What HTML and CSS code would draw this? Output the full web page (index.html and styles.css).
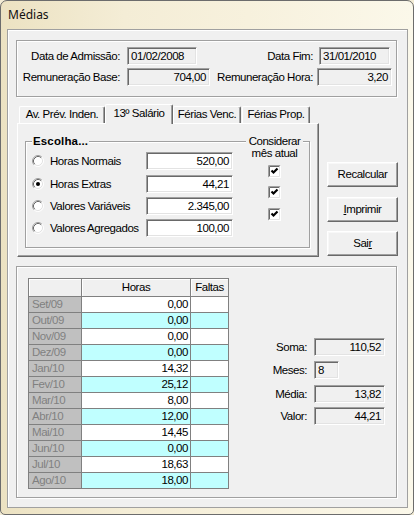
FILE: index.html
```html
<!DOCTYPE html>
<html lang="pt">
<head>
<meta charset="utf-8">
<title>Médias</title>
<link rel="stylesheet" href="styles.css">
</head>
<body>
<div class="window">
  <div class="titlebar">Médias</div>
  <div class="client">
    <div class="panel info">
      <div class="info-row">
        <span class="lbl lw1">Data de Admissão:</span>
        <span class="field ro fw-date">01/02/2008</span>
        <span class="lbl lw2">Data Fim:</span>
        <span class="field ro fw-date2">31/01/2010</span>
      </div>
      <div class="info-row">
        <span class="lbl lw1">Remuneração Base:</span>
        <span class="field ro num fw-base">704,00</span>
        <span class="lbl lw3">Remuneração Hora:</span>
        <span class="field ro num fw-hora">3,20</span>
      </div>
    </div>

    <div class="middle">
      <div class="tabs">
        <div class="tabstrip">
          <div class="tab tab1">Av. Prév. Inden.</div>
          <div class="tab tab2 active">13º Salário</div>
          <div class="tab tab3">Férias Venc.</div>
          <div class="tab tab4">Férias Prop.</div>
        </div>
        <div class="tabpanel">
          <div class="group">
            <span class="cap cap-left">Escolha...</span>
            <span class="cap cap-right">Considerar<br>mês atual</span>
            <div class="group-body">
              <div class="options">
                <div class="opt">
                  <svg class="radio" width="12" height="12" viewBox="0 0 12 12"><circle cx="6" cy="6" r="5" fill="#fff"/><path d="M2.11 9.89A5.5 5.5 0 0 1 9.89 2.11" fill="none" stroke="#a0a0a0"/><path d="M9.89 2.11A5.5 5.5 0 0 1 2.11 9.89" fill="none" stroke="#fff"/><path d="M2.82 9.18A4.5 4.5 0 0 1 9.18 2.82" fill="none" stroke="#696969"/><path d="M9.18 2.82A4.5 4.5 0 0 1 2.82 9.18" fill="none" stroke="#e3e3e3"/></svg>
                  <span class="opt-lbl">Horas Normais</span>
                  <span class="field ed num">520,00</span>
                </div>
                <div class="opt">
                  <svg class="radio" width="12" height="12" viewBox="0 0 12 12"><circle cx="6" cy="6" r="5" fill="#fff"/><path d="M2.11 9.89A5.5 5.5 0 0 1 9.89 2.11" fill="none" stroke="#a0a0a0"/><path d="M9.89 2.11A5.5 5.5 0 0 1 2.11 9.89" fill="none" stroke="#fff"/><path d="M2.82 9.18A4.5 4.5 0 0 1 9.18 2.82" fill="none" stroke="#696969"/><path d="M9.18 2.82A4.5 4.5 0 0 1 2.82 9.18" fill="none" stroke="#e3e3e3"/><circle cx="6" cy="6" r="2" fill="#000"/></svg>
                  <span class="opt-lbl">Horas Extras</span>
                  <span class="field ed num">44,21</span>
                </div>
                <div class="opt">
                  <svg class="radio" width="12" height="12" viewBox="0 0 12 12"><circle cx="6" cy="6" r="5" fill="#fff"/><path d="M2.11 9.89A5.5 5.5 0 0 1 9.89 2.11" fill="none" stroke="#a0a0a0"/><path d="M9.89 2.11A5.5 5.5 0 0 1 2.11 9.89" fill="none" stroke="#fff"/><path d="M2.82 9.18A4.5 4.5 0 0 1 9.18 2.82" fill="none" stroke="#696969"/><path d="M9.18 2.82A4.5 4.5 0 0 1 2.82 9.18" fill="none" stroke="#e3e3e3"/></svg>
                  <span class="opt-lbl">Valores Variáveis</span>
                  <span class="field ed num">2.345,00</span>
                </div>
                <div class="opt">
                  <svg class="radio" width="12" height="12" viewBox="0 0 12 12"><circle cx="6" cy="6" r="5" fill="#fff"/><path d="M2.11 9.89A5.5 5.5 0 0 1 9.89 2.11" fill="none" stroke="#a0a0a0"/><path d="M9.89 2.11A5.5 5.5 0 0 1 2.11 9.89" fill="none" stroke="#fff"/><path d="M2.82 9.18A4.5 4.5 0 0 1 9.18 2.82" fill="none" stroke="#696969"/><path d="M9.18 2.82A4.5 4.5 0 0 1 2.82 9.18" fill="none" stroke="#e3e3e3"/></svg>
                  <span class="opt-lbl">Valores Agregados</span>
                  <span class="field ed num">100,00</span>
                </div>
              </div>
              <div class="checks">
                <svg class="check" width="13" height="13" viewBox="0 0 13 13"><rect x="0" y="0" width="13" height="13" fill="#fff"/><path d="M0.5 12.5V0.5H12.5" fill="none" stroke="#a0a0a0"/><path d="M0.5 12.5H12.5V0.5" fill="none" stroke="#fff"/><path d="M1.5 11.5V1.5H11.5" fill="none" stroke="#696969"/><path d="M1.5 11.5H11.5V1.5" fill="none" stroke="#e3e3e3"/><path d="M3.5 5.5L5.5 7.5L9.5 3.5" fill="none" stroke="#000" stroke-width="2.2"/></svg>
                <svg class="check" width="13" height="13" viewBox="0 0 13 13"><rect x="0" y="0" width="13" height="13" fill="#fff"/><path d="M0.5 12.5V0.5H12.5" fill="none" stroke="#a0a0a0"/><path d="M0.5 12.5H12.5V0.5" fill="none" stroke="#fff"/><path d="M1.5 11.5V1.5H11.5" fill="none" stroke="#696969"/><path d="M1.5 11.5H11.5V1.5" fill="none" stroke="#e3e3e3"/><path d="M3.5 5.5L5.5 7.5L9.5 3.5" fill="none" stroke="#000" stroke-width="2.2"/></svg>
                <svg class="check" width="13" height="13" viewBox="0 0 13 13"><rect x="0" y="0" width="13" height="13" fill="#fff"/><path d="M0.5 12.5V0.5H12.5" fill="none" stroke="#a0a0a0"/><path d="M0.5 12.5H12.5V0.5" fill="none" stroke="#fff"/><path d="M1.5 11.5V1.5H11.5" fill="none" stroke="#696969"/><path d="M1.5 11.5H11.5V1.5" fill="none" stroke="#e3e3e3"/><path d="M3.5 5.5L5.5 7.5L9.5 3.5" fill="none" stroke="#000" stroke-width="2.2"/></svg>
              </div>
            </div>
          </div>
        </div>
      </div>
      <div class="buttons">
        <div class="btn">Recalcular</div>
        <div class="btn"><u>I</u>mprimir</div>
        <div class="btn">Sai<u>r</u></div>
      </div>
    </div>

    <div class="panel lower">
      <div class="grid">
        <div class="hd"></div><div class="hd hc">Horas</div><div class="hd hc">Faltas</div>
        <div class="rl">Set/09</div><div class="v">0,00</div><div class="v"></div>
        <div class="rl">Out/09</div><div class="v c">0,00</div><div class="v c"></div>
        <div class="rl">Nov/09</div><div class="v">0,00</div><div class="v"></div>
        <div class="rl">Dez/09</div><div class="v c">0,00</div><div class="v c"></div>
        <div class="rl">Jan/10</div><div class="v">14,32</div><div class="v"></div>
        <div class="rl">Fev/10</div><div class="v c">25,12</div><div class="v c"></div>
        <div class="rl">Mar/10</div><div class="v">8,00</div><div class="v"></div>
        <div class="rl">Abr/10</div><div class="v c">12,00</div><div class="v c"></div>
        <div class="rl">Mai/10</div><div class="v">14,45</div><div class="v"></div>
        <div class="rl">Jun/10</div><div class="v c">0,00</div><div class="v c"></div>
        <div class="rl">Jul/10</div><div class="v">18,63</div><div class="v"></div>
        <div class="rl">Ago/10</div><div class="v c">18,00</div><div class="v c"></div>
      </div>
      <div class="totals">
        <span class="lbl">Soma:</span><span class="field ro num tw-long">110,52</span>
        <span class="lbl">Meses:</span><span class="field ro tw-short">8</span>
        <span class="lbl row-media">Média:</span><span class="field ro num tw-long row-media">13,82</span>
        <span class="lbl">Valor:</span><span class="field ro num tw-long">44,21</span>
      </div>
    </div>
  </div>
</div>
</body>
</html>
```

FILE: styles.css
```css
* { box-sizing: border-box; }
html, body { margin: 0; padding: 0; }
body {
  width: 414px;
  height: 515px;
  overflow: hidden;
  background: #f3ecd5;
  font-family: "Liberation Sans", Arial, sans-serif;
  font-size: 11.5px;
  letter-spacing: -0.45px;
  color: #000;
}
.window {
  width: 414px;
  height: 515px;
  border: 1px solid #6c6c6c;
  border-radius: 7px 7px 5px 5px;
  background: linear-gradient(90deg, #ece2c2 0%, #f4edd6 30%, #f7f1dd 60%, #fbf8ea 100%);
  padding: 0 5px 6px 6px;
  display: flex;
  flex-direction: column;
}
.titlebar {
  height: 28px;
  padding: 6px 0 0 1px;
  font-family: "Noto Sans", "Open Sans", sans-serif;
  font-size: 12px;
  line-height: 16px;
  letter-spacing: 0;
  color: #111;
}
.client {
  width: 401px;
  height: 479px;
  border: 1px solid #a0a0a0;
  background: #f0f0f0;
  box-shadow: inset 1px 1px 0 #fff;
  display: flex;
  flex-direction: column;
  align-items: flex-start;
}
.panel {
  border: 1px solid #a0a0a0;
  box-shadow: inset 1px 1px 0 #fff, 1px 1px 0 #fff;
}
.info {
  margin: 10px 0 0 8px;
  width: 381px;
  height: 57px;
  padding-top: 6px;
  display: flex;
  flex-direction: column;
  gap: 3px;
}
.info-row {
  display: flex;
  align-items: center;
  height: 18px;
}
.lbl { text-align: right; white-space: nowrap; }
.lw1 { width: 103px; margin-right: 7px; }
.lw2 { width: 116px; margin-right: 6px; }
.lw3 { width: 103px; margin-right: 4px; }

.field {
  display: block;
  height: 18px;
  line-height: 14px;
  padding: 1px 3px 0 3px;
  border: 1px solid;
  border-color: #a0a0a0 #fff #fff #a0a0a0;
  box-shadow: inset 1px 1px 0 #696969, inset -1px -1px 0 #e3e3e3;
  white-space: nowrap;
}
.ro { background: #f0f0f0; }
.ed { background: #fff; }
.num { text-align: right; padding-right: 3px; }
.fw-date { width: 70px; }
.fw-date2 { width: 71px; }
.fw-base { width: 83px; }
.fw-hora { width: 75px; }

/* middle area */
.middle {
  margin: 7px 0 0 9px;
  display: flex;
  align-items: flex-start;
}
.tabs { width: 302px; display: flex; flex-direction: column; }
.tabstrip {
  height: 19px;
  display: flex;
  align-items: flex-end;
  padding-left: 2px;
}
.tab {
  height: 17px;
  background: #f0f0f0;
  border-top: 1px solid #fff;
  border-left: 1px solid #fff;
  border-right: 1px solid #696969;
  box-shadow: inset -1px 0 0 #a0a0a0;
  border-radius: 2px 2px 0 0;
  text-align: center;
  line-height: 15px;
  white-space: nowrap;
}
.tab1 { width: 86px; }
.tab2 { width: 68px; }
.tab3 { width: 68px; }
.tab4 { width: 68px; margin-left: 1px; }
.tab.active {
  position: relative;
  z-index: 2;
  height: 20px;
  margin-bottom: -1px;
  line-height: 16px;
}
.tabpanel {
  height: 134px;
  border-top: 1px solid #fff;
  border-left: 1px solid #fff;
  border-right: 1px solid #696969;
  border-bottom: 1px solid #696969;
  box-shadow: inset -1px -1px 0 #a0a0a0;
  padding: 17px 0 0 7px;
}
.group {
  position: relative;
  width: 285px;
  height: 107px;
  border: 1px solid #a0a0a0;
  box-shadow: inset 1px 1px 0 #fff, 1px 1px 0 #fff;
}
.cap {
  position: absolute;
  background: #f0f0f0;
  line-height: 12px;
  white-space: nowrap;
}
.cap-left {
  left: 6px;
  top: -7px;
  padding: 0 1px;
  font-weight: bold;
  letter-spacing: 0.15px;
}
.cap-right {
  left: 220px;
  top: -7px;
  width: 57px;
  padding: 0 2px;
  text-align: center;
}
.group-body {
  display: flex;
  padding: 10px 0 0 6px;
}
.options { display: flex; flex-direction: column; }
.opt {
  display: flex;
  align-items: center;
  height: 18px;
}
.opt + .opt { margin-top: 4px; }
.opt:nth-child(2) { margin-top: 5px; }
.radio { display: block; flex: none; }
.opt-lbl { width: 96px; margin-left: 6px; white-space: nowrap; }
.opt .field { width: 87px; }
.checks {
  display: flex;
  flex-direction: column;
  margin-left: 35px;
  padding-top: 13px;
}
.check { display: block; }
.check + .check { margin-top: 8px; }
.check:nth-child(3) { margin-top: 9px; }

.buttons {
  margin-left: 8px;
  padding-top: 58px;
  display: flex;
  flex-direction: column;
}
.btn {
  width: 71px;
  height: 25px;
  border: 1px solid;
  border-color: #fff #696969 #696969 #fff;
  box-shadow: inset -1px -1px 0 #a0a0a0, inset 1px 1px 0 #f8f8f8;
  background: #f0f0f0;
  text-align: center;
  line-height: 22px;
  white-space: nowrap;
}
.btn + .btn { margin-top: 10px; }
.btn:nth-child(3) { margin-top: 9px; }
.btn u { text-decoration: underline; text-underline-offset: 1px; }

/* lower */
.lower {
  margin: 9px 0 0 8px;
  width: 381px;
  height: 232px;
  padding: 11px 0 0 11px;
  display: flex;
  align-items: flex-start;
}
.grid {
  display: grid;
  grid-template-columns: 52px 108px 37px;
  grid-template-rows: 17px repeat(12, 15px);
  gap: 1px;
  padding: 1px;
  background: #808080;
  width: 201px;
}
.hd {
  background: #f0f0f0;
  box-shadow: inset 1px 1px 0 #fff;
  line-height: 17px;
}
.hc { text-align: center; }
.rl {
  background: #c0c0c0;
  color: #808080;
  padding-left: 3px;
  line-height: 15px;
  white-space: nowrap;
}
.v {
  background: #fff;
  text-align: right;
  padding-right: 2px;
  line-height: 15px;
}
.v.c { background: #c0ffff; }

.totals {
  margin: 60px 0 0 0;
  display: grid;
  grid-template-columns: 78px auto;
  grid-auto-rows: 18px;
  column-gap: 7px;
  row-gap: 5px;
  align-items: center;
  justify-items: start;
}
.totals .lbl { justify-self: end; }
.totals .row-media { margin-top: 1px; }
.tw-long { width: 71px; }
.tw-short { width: 25px; }
```
